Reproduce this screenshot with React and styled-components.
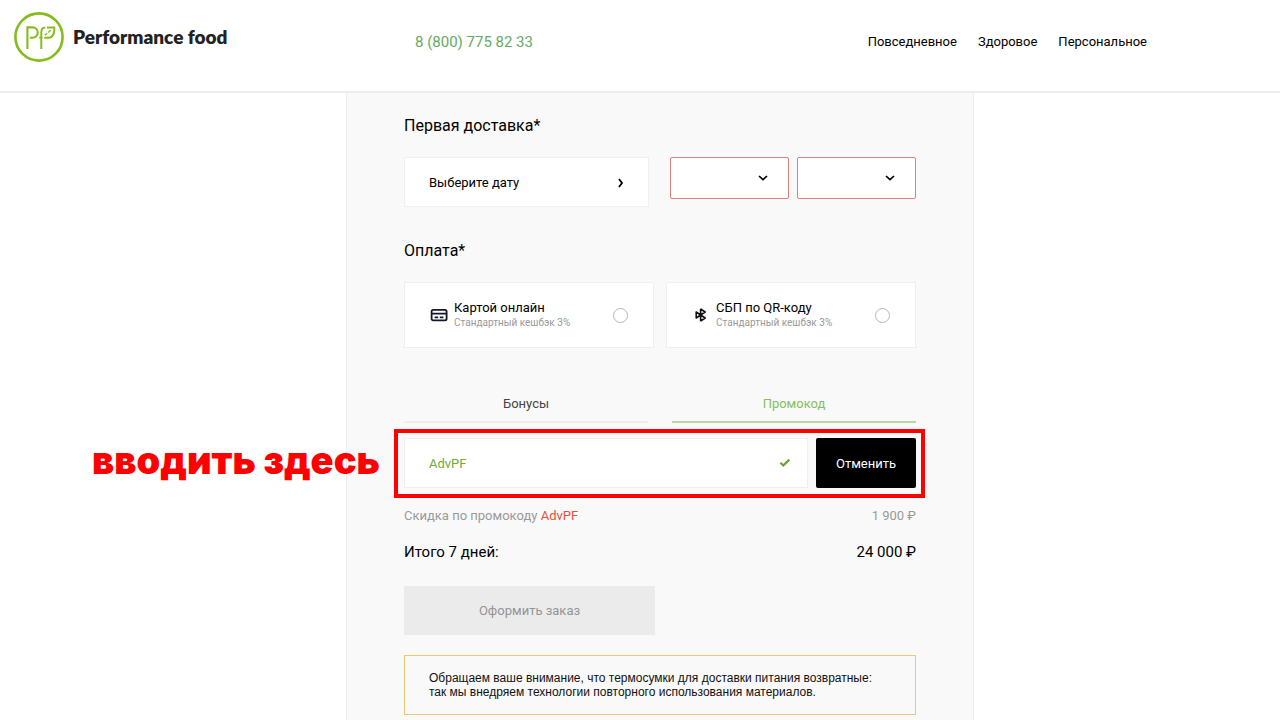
/**
* The checkout page
*
*/
import React, { useState } from "react";
import styled, { createGlobalStyle, css } from "styled-components";

const GlobalStyle = createGlobalStyle`
	*, *::before, *::after {
		box-sizing: border-box;
	}

	body {
		margin: 0;
		background: #fff;
		color: #000;
		font: 13px/16px Roboto, "Liberation Sans", sans-serif;
	}

	button, input, select {
		font: inherit;
		color: inherit;
	}
`;

/**
* The page container
*/
const Page = styled.div`
	display: flex;
	flex-direction: column;
	min-height: 100vh;
`;

/**
* The header
*/
const Header = styled.header`
	display: grid;
	grid-template-columns: 401px auto 1fr;
	align-items: start;
	height: 93px;
	padding: 12px 133px 0 14px;
	border-bottom: 2px solid #ededed;
`;

const LogoLink = styled.a`
	display: flex;
	align-items: center;
	gap: 9px;
	color: #222;
	font: 800 19px/50px Lato, sans-serif;
	text-decoration: none;
`;

const Phone = styled.a`
	color: #64ab62;
	font-size: 15px;
	line-height: 60px;
	text-decoration: none;
`;

const Nav = styled.nav`
	display: flex;
	justify-content: flex-end;
	gap: 21px;
	line-height: 60px;
`;

const NavLink = styled.a`
	color: #000;
	text-decoration: none;
`;

/**
* The order panel
*/
const Main = styled.main`
	display: flex;
	flex: 1;
	justify-content: center;
	padding-left: 40px;
`;

const Panel = styled.form`
	width: 100%;
	max-width: 628px;
	padding: 23px 57px 5px;
	border: solid #ededed;
	border-width: 0 1px;
	background: #f9f9f9;
`;

const Title = styled.h2`
	margin: 0 0 21px;
	font-size: 16px;
	font-weight: 400;
	line-height: 20px;
`;

const box = css`
	border: 1px solid #efefef;
	background: #fff;
`;

/**
* Delivery date and time
*/
const Delivery = styled.div`
	display: grid;
	grid-template-columns: 245fr 246fr;
	gap: 21px;
	align-items: start;
	margin-bottom: 34px;
`;

const DateButton = styled.button`
	${box}
	display: flex;
	align-items: center;
	justify-content: space-between;
	height: 50px;
	padding: 2px 24px 0;
`;

const Times = styled.div`
	display: grid;
	grid-template-columns: 1fr 1fr;
	gap: 8px;
`;

const SelectBox = styled.div`
	display: grid;
	align-items: center;

	> * {
		grid-area: 1 / 1;
	}

	svg {
		justify-self: end;
		margin-right: 21px;
		pointer-events: none;
	}
`;

const Select = styled.select`
	appearance: none;
	width: 100%;
	height: 42px;
	padding: 0 12px;
	border: 1px solid #e07f7b;
	border-radius: 2px;
	background: #fff;
`;

/**
* Payment methods
*/
const Methods = styled.div`
	display: grid;
	grid-template-columns: 1fr 1fr;
	gap: 12px;
	margin-bottom: 44px;
`;

const Method = styled.label`
	${box}
	display: grid;
	grid-template-columns: 24px 1fr 15px;
	align-items: center;
	height: 66px;
	padding: 0 25px;
`;

const MethodName = styled.div`
	line-height: 16px;
`;

const MethodNote = styled.div`
	color: #999;
	font-size: 10px;
	line-height: 14px;
`;

const Radio = styled.input`
	appearance: none;
	width: 15px;
	height: 15px;
	margin: 0;
	border: 1px solid #b5b5b5;
	border-radius: 50%;

	&:checked {
		border: 4px solid #6cb33f;
	}
`;

/**
* Bonus and promo code tabs
*/
const Tabs = styled.div`
	display: grid;
	grid-template-columns: 1fr 1fr;
	gap: 24px;
	margin-bottom: 15px;
`;

const Tab = styled.button`
	height: 31px;
	padding: 0 0 6px;
	border: 0;
	border-bottom: 2px solid ${props => props.$active ? "#b9d8a4" : "#ededed"};
	background: none;
	color: ${props => props.$active ? "#86bf60" : "#444"};
`;

const Promo = styled.div`
	position: relative;
	display: grid;
	grid-template-columns: 1fr 100px;
	gap: 8px;
	margin-bottom: 20px;
`;

const PromoField = styled.div`
	${box}
	display: flex;
	align-items: center;
	height: 50px;
	padding: 0 16px 0 24px;
`;

const PromoInput = styled.input`
	flex: 1;
	min-width: 0;
	padding: 2px 0 0;
	border: 0;
	outline: 0;
	background: none;
	color: #6cab3c;
`;

const CancelButton = styled.button`
	padding: 2px 0 0;
	border: 0;
	border-radius: 2px;
	background: #000;
	color: #fff;
`;

/**
* The frame around the promo code and its caption
*/
const Highlight = styled.div`
	position: absolute;
	inset: -9px -9px -10px -10px;
	border: 4px solid #f00;
	pointer-events: none;
`;

const Caption = styled.div`
	position: absolute;
	top: -2px;
	right: 100%;
	margin-right: 24px;
	color: #f00;
	font: 900 38px/48px Inter, sans-serif;
	white-space: nowrap;
`;

/**
* Totals
*/
const Row = styled.div`
	display: flex;
	justify-content: space-between;
	line-height: 16px;
	color: #999;
	margin-bottom: 18px;

	${props => props.$total && css`
		color: #000;
		font-size: 15px;
		line-height: 20px;
		margin-bottom: 24px;
	`}
`;

const Code = styled.span`
	color: #e0523c;
`;

const SubmitButton = styled.button`
	display: block;
	width: 251px;
	height: 49px;
	margin-bottom: 20px;
	border: 0;
	background: #ebebeb;

	&:disabled {
		color: #949494;
	}
`;

const Notice = styled.p`
	margin: 0;
	padding: 15px 24px;
	border: 1px solid #ecc877;
	color: #111;
	font: 12px/14px "Liberation Sans", Arial, sans-serif;
`;

/**
* Icons
*/
const LogoIcon = () => (
	<svg width="50" height="50" viewBox="0 0 50 50" fill="none" stroke="#86bc1c" aria-hidden="true">
		<circle cx="25" cy="25" r="23.6" strokeWidth="2.6" />
		<path d="M13.4 37V15.4h5.2a5.1 5.1 0 0 1 0 10.3h-2.8" strokeWidth="2.1" />
		<path d="M27.3 37V20.6c0-3.5 1.4-5.2 4-5.2M33 15.4h7.3c.5 6-1.5 10-5.4 10.3h-4.6M28.5 25.7h-3.2" strokeWidth="2" />
		<path d="M30.8 23.2l2.4-2M34.2 20.5l2.6-2.4" strokeWidth="1.4" />
	</svg>
);

const ChevronDown = () => (
	<svg width="10" height="6" viewBox="0 0 10 6" fill="none" stroke="#000" strokeWidth="1.7" aria-hidden="true">
		<path d="M1 1l4 3.7L9 1" />
	</svg>
);

const ChevronRight = () => (
	<svg width="7" height="10" viewBox="0 0 7 10" fill="none" stroke="#000" strokeWidth="1.8" aria-hidden="true">
		<path d="M2 1l3 4-3 4" />
	</svg>
);

const CardIcon = () => (
	<svg width="18" height="14" viewBox="0 0 18 14" fill="none" stroke="#15182b" strokeWidth="1.8" aria-hidden="true">
		<rect x="1.6" y="1.8" width="15" height="10.6" rx="1.6" />
		<path d="M1.6 5.6h15M4.6 9.3h3.6M9.8 9.3h3.6" />
	</svg>
);

const SbpIcon = () => (
	<svg width="16" height="16" viewBox="0 0 16 16" fill="none" stroke="#111" strokeWidth="1.6" strokeLinejoin="round" aria-hidden="true">
		<path d="M4.2 5v6l4.4-3zM8.6 1.8v12.4M8.6 2l4.6 3-4.6 3 4.6 3-4.6 3" />
	</svg>
);

const CheckIcon = () => (
	<svg width="12" height="10" viewBox="0 0 12 10" fill="none" stroke="#5fa637" strokeWidth="2.2" aria-hidden="true">
		<path d="M1.5 4.8l2.8 2.7L10.3 1.6" />
	</svg>
);

const methods = [
	{ id: "card", name: "Картой онлайн", note: "Стандартный кешбэк 3%", icon: <CardIcon /> },
	{ id: "sbp", name: "СБП по QR-коду", note: "Стандартный кешбэк 3%", icon: <SbpIcon /> },
];

const TimeSelect = ({ label }) => (
	<SelectBox>
		<Select aria-label={label} defaultValue="">
			<option value=""></option>
		</Select>
		<ChevronDown />
	</SelectBox>
);

/**
* The main component
*/
const App = () => {
	const [tab, setTab] = useState("promo");
	const [code, setCode] = useState("AdvPF");

	return (
		<Page>
			<GlobalStyle />
			<Header>
				<LogoLink href="#">
					<LogoIcon />
					Performance food
				</LogoLink>
				<Phone href="tel:88007758233">8 (800) 775 82 33</Phone>
				<Nav>
					<NavLink href="#">Повседневное</NavLink>
					<NavLink href="#">Здоровое</NavLink>
					<NavLink href="#">Персональное</NavLink>
				</Nav>
			</Header>
			<Main>
				<Panel onSubmit={(e) => e.preventDefault()}>
					<Title>Первая доставка*</Title>
					<Delivery>
						<DateButton type="button">
							Выберите дату
							<ChevronRight />
						</DateButton>
						<Times>
							<TimeSelect label="Время с" />
							<TimeSelect label="Время до" />
						</Times>
					</Delivery>

					<Title>Оплата*</Title>
					<Methods>
						{methods.map(({ id, name, note, icon }) => (
							<Method key={id}>
								{icon}
								<div>
									<MethodName>{name}</MethodName>
									<MethodNote>{note}</MethodNote>
								</div>
								<Radio type="radio" name="payment" value={id} />
							</Method>
						))}
					</Methods>

					<Tabs role="tablist">
						<Tab
							type="button"
							role="tab"
							aria-selected={tab === "bonus"}
							$active={tab === "bonus"}
							onClick={() => setTab("bonus")}
							>
							Бонусы
						</Tab>
						<Tab
							type="button"
							role="tab"
							aria-selected={tab === "promo"}
							$active={tab === "promo"}
							onClick={() => setTab("promo")}
							>
							Промокод
						</Tab>
					</Tabs>
					<Promo>
						<PromoField>
							<PromoInput
								aria-label="Промокод"
								value={code}
								onChange={(e) => setCode(e.target.value)}
							/>
							<CheckIcon />
						</PromoField>
						<CancelButton type="button" onClick={() => setCode("")}>Отменить</CancelButton>
						<Highlight />
						<Caption>вводить здесь</Caption>
					</Promo>

					<Row>
						<span>Скидка по промокоду <Code>AdvPF</Code></span>
						<span>1 900 ₽</span>
					</Row>
					<Row $total>
						<span>Итого 7 дней:</span>
						<span>24 000 ₽</span>
					</Row>
					<SubmitButton type="submit" disabled>Оформить заказ</SubmitButton>
					<Notice>
						Обращаем ваше внимание, что термосумки для доставки питания возвратные:
						так мы внедряем технологии повторного использования материалов.
					</Notice>
				</Panel>
			</Main>
		</Page>
	);
};

export default App;
